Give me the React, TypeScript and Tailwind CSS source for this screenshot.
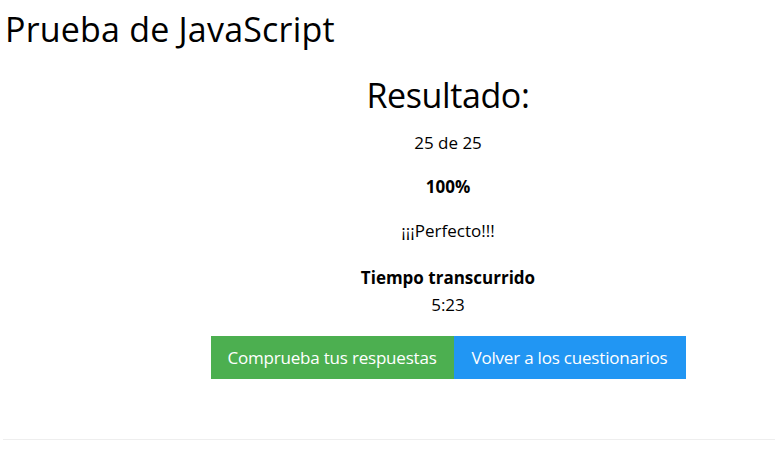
import React from 'react';

const App = () => {
  return (
    <div className="bg-white text-black min-h-[457px] font-['Open_Sans','Noto_Sans',sans-serif]">
      <h1 className="pl-[5px] pt-[8px] text-[34px] leading-[42px] tracking-[0.2px]">Prueba de JavaScript</h1>
      <div className="ml-[121px] flex flex-col items-center text-center">
        <h2 className="mt-[23px] text-[34px] leading-[44px] tracking-[-0.4px]">Resultado:</h2>
        <p className="mt-[14px] text-[17px] leading-[24px]">25 de 25</p>
        <p className="mt-[20px] text-[17px] leading-[24px] font-bold">100%</p>
        <p className="mt-[20px] text-[17px] leading-[24px]">¡¡¡Perfecto!!!</p>
        <p className="mt-[23px] text-[17px] leading-[24px] font-bold">Tiempo transcurrido</p>
        <p className="mt-[3px] text-[17px] leading-[24px]">5:23</p>
        <div className="mt-[19px] flex">
          <button className="h-[43px] w-[243px] bg-[#4caf50] text-white text-[17px] tracking-[-0.2px]">
            Comprueba tus respuestas
          </button>
          <button className="h-[43px] w-[232px] bg-[#2196f3] text-white text-[17px] tracking-[-0.2px]">
            Volver a los cuestionarios
          </button>
        </div>
      </div>
      <hr className="ml-[3px] mt-[60px] border-t border-[#eeeeee]" />
    </div>
  );
};

export default App;
